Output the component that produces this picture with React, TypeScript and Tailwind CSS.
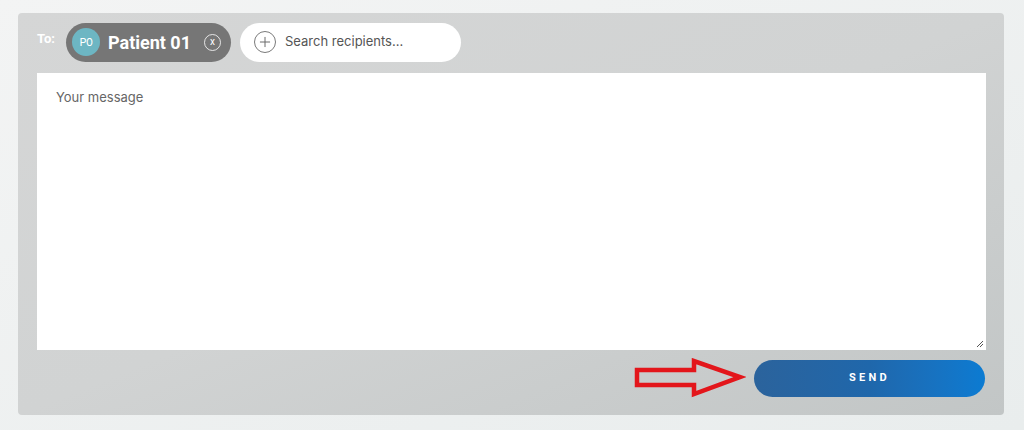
import { Plus } from 'lucide-react';

export default function App() {
  return (
    <div className="w-[1024px] h-[430px] bg-gradient-to-br from-[#f3f4f4] to-[#e9eded] pt-[13px] pl-[18px] font-['Roboto',sans-serif]">
      <div className="w-[986px] h-[402px] rounded-[4px] bg-gradient-to-br from-[#d5d6d6] via-[#d1d3d3] to-[#c2c6c6] px-[19px] pt-[9px]">
        <div className="flex items-center h-[40px]">
          <span className="text-[13px] font-bold text-white w-[29px] -mt-[6px]">To:</span>
          <div className="flex items-center h-[39px] w-[165px] rounded-full bg-[#767676] pl-[6px]">
            <div className="w-[28px] h-[28px] rounded-full bg-[#6db6c3] flex items-center justify-center text-white text-[11px] font-['Inter',sans-serif] tracking-tighter">
              P0
            </div>
            <span className="ml-[8px] text-white text-[18px] font-bold">Patient 01</span>
            <div className="ml-[13px] w-[17px] h-[17px] rounded-full border border-white/80 flex items-center justify-center text-white text-[10px] leading-none pb-[1px]">
              x
            </div>
          </div>
          <div className="ml-[9px] flex items-center h-[39px] w-[221px] rounded-full bg-white pl-[14px]">
            <div className="w-[22px] h-[22px] rounded-full border border-[#7a7a7a] flex items-center justify-center">
              <Plus className="w-[16px] h-[16px] text-[#6a6a6a]" strokeWidth={1.5} />
            </div>
            <span className="ml-[9px] text-[13px] text-[#555] font-['Inter',sans-serif]">Search recipients...</span>
          </div>
        </div>
        <div className="relative mt-[11px] h-[277px] w-[949px] bg-white">
          <div className="pl-[19px] pt-[15px] text-[13px] text-[#666] font-['Inter',sans-serif]">Your message</div>
          <svg className="absolute right-[2px] bottom-[2px]" width="8" height="8" viewBox="0 0 8 8">
            <path d="M1 7 L7 1 M4 7 L7 4" stroke="#555" strokeWidth="1" />
          </svg>
        </div>
        <div className="flex items-center justify-end mt-[8px]">
          <svg width="112" height="40" viewBox="0 0 112 40" className="mr-[8px]">
            <path d="M3 12 L60 12 L60 3 L106 19 L60 36 L60 27 L3 27 Z" fill="none" stroke="#e3161b" strokeWidth="4.5" strokeLinejoin="miter" />
          </svg>
          <button className="w-[231px] h-[37px] rounded-full bg-gradient-to-r from-[#2b639c] via-[#1f67ab] to-[#0b7bd2] text-white text-[11px] font-bold tracking-[0.3em]">
            SEND
          </button>
        </div>
      </div>
    </div>
  );
}
